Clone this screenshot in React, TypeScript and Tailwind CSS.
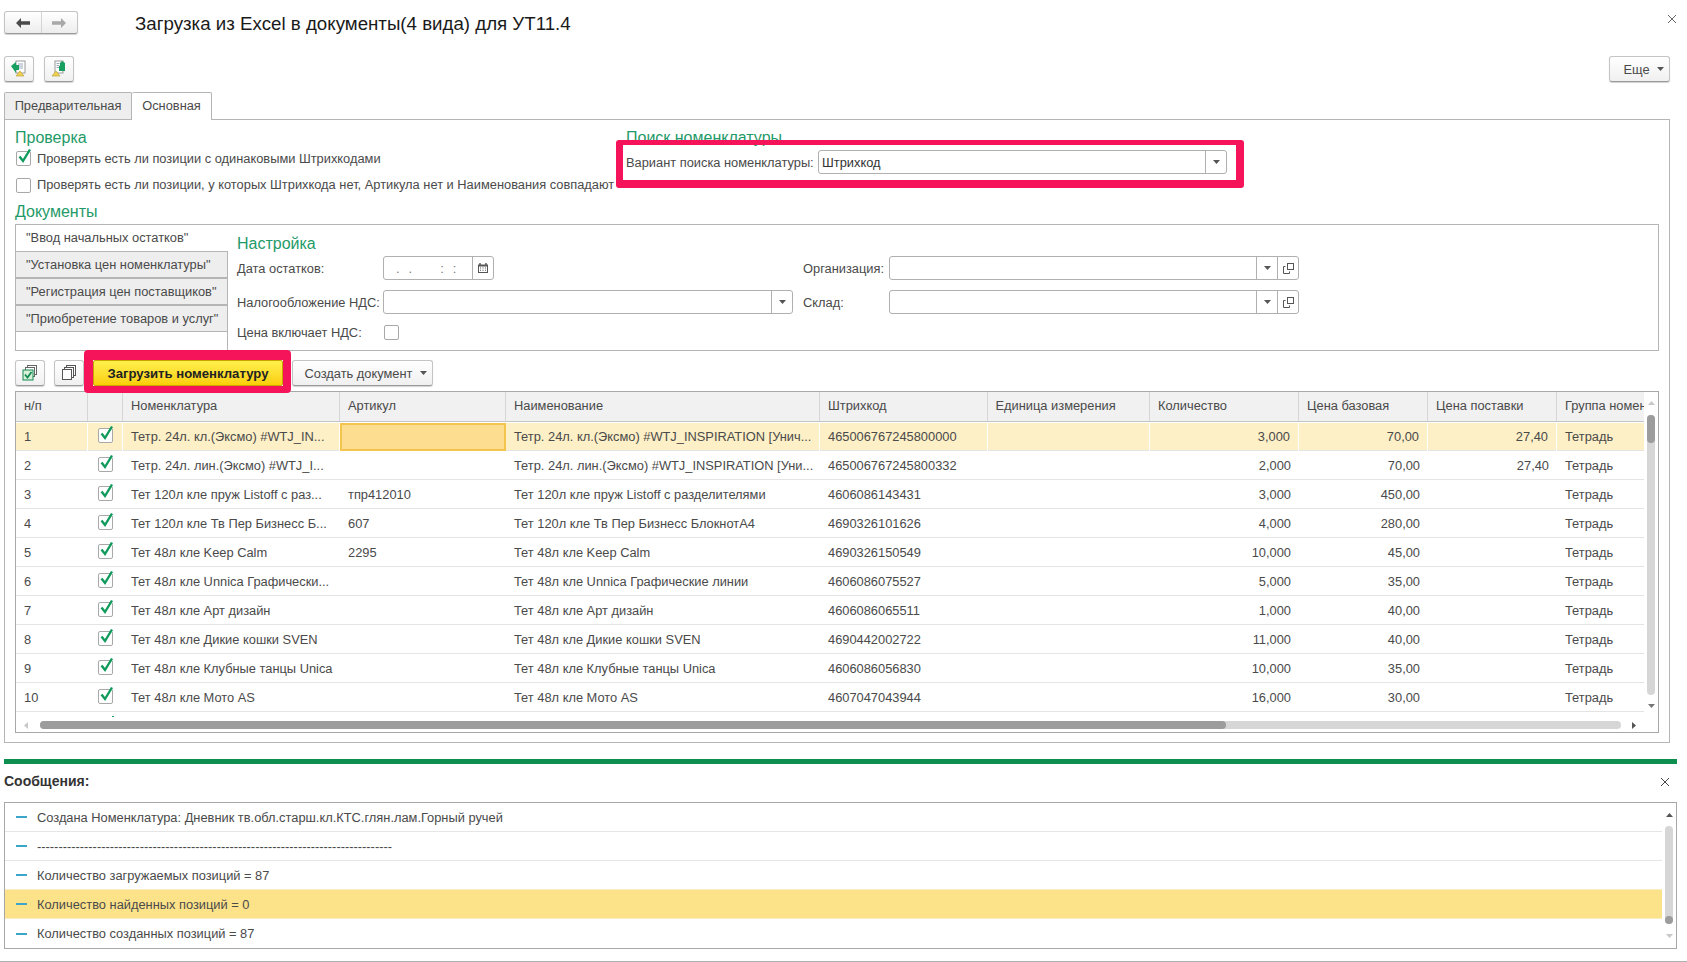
import React from "react";

const Caret = ({ className = "" }: { className?: string }) => (
  <svg width="7" height="4" viewBox="0 0 7 4" className={className}><path d="M0 0h7L3.5 4z" fill="#555" /></svg>
);

const CheckBox = ({ checked = false }: { checked?: boolean }) => (
  <span className="relative block w-[15px] h-[15px] rounded-[2px] border border-[#a8a8a8] bg-white shrink-0">
    {checked && (
      <svg width="17" height="18" viewBox="0 0 17 18" className="absolute left-[-1px] top-[-5px]">
        <path d="M3.5 9.5 L7 14 L14 2.5" fill="none" stroke="#109a5c" strokeWidth="2.4" />
      </svg>
    )}
  </span>
);

const ToolBtn = ({ children, className = "" }: { children: React.ReactNode; className?: string }) => (
  <div className={`flex items-center justify-center h-[26px] rounded-[3px] border border-[#c4c4c4] border-b-[#9a9a9a] bg-gradient-to-b from-white to-[#f0f0f0] shadow-[0_1px_1px_rgba(0,0,0,0.18)] ${className}`}>
    {children}
  </div>
);

const Field = ({ w, text, buttons }: { w: string; text?: string; buttons: React.ReactNode }) => (
  <div className={`flex h-[24px] rounded-[3px] border border-[#b0b0b0] bg-white ${w}`}>
    <div className="flex-1 pl-[3px] leading-[24px] text-[#333]">{text}</div>
    {buttons}
  </div>
);

const DropBtn = () => (
  <div className="w-[21px] border-l border-[#b0b0b0] flex items-center justify-center"><Caret /></div>
);

const OpenBtn = () => (
  <div className="w-[21px] border-l border-[#b0b0b0] flex items-center justify-center">
    <svg width="11" height="11" viewBox="0 0 11 11" fill="none" stroke="#555" strokeWidth="1">
      <rect x="4.5" y="0.5" width="6" height="6" />
      <path d="M2.5 3.5H0.5V10.5H6.5V8.5" />
    </svg>
  </div>
);

const Label = ({ w, children }: { w: string; children: React.ReactNode }) => (
  <span className={`pt-[2px] whitespace-nowrap ${w}`}>{children}</span>
);

const cols = "grid grid-cols-[72px_35px_217px_166px_314px_167.5px_162.5px_149px_129px_129px_87px]";

type Row = [string, string, string, string, string, string, string, string];
const rows: Row[] = [
  ["Тетр. 24л. кл.(Эксмо) #WTJ_IN...", "", "Тетр. 24л. кл.(Эксмо) #WTJ_INSPIRATION [Унич...", "465006767245800000", "3,000", "70,00", "27,40", "1"],
  ["Тетр. 24л. лин.(Эксмо) #WTJ_I...", "", "Тетр. 24л. лин.(Эксмо) #WTJ_INSPIRATION [Уни...", "465006767245800332", "2,000", "70,00", "27,40", "2"],
  ["Тет 120л кле пруж Listoff с раз...", "тпр412010", "Тет 120л кле пруж Listoff с разделителями", "4606086143431", "3,000", "450,00", "", "3"],
  ["Тет 120л кле Тв Пер Бизнесс Б...", "607", "Тет 120л кле Тв Пер Бизнесс БлокнотА4", "4690326101626", "4,000", "280,00", "", "4"],
  ["Тет 48л кле Keep Calm", "2295", "Тет 48л кле Keep Calm", "4690326150549", "10,000", "45,00", "", "5"],
  ["Тет 48л кле Unnica Графически...", "", "Тет 48л кле Unnica Графические линии", "4606086075527", "5,000", "35,00", "", "6"],
  ["Тет 48л кле Арт дизайн", "", "Тет 48л кле Арт дизайн", "4606086065511", "1,000", "40,00", "", "7"],
  ["Тет 48л кле Дикие кошки SVEN", "", "Тет 48л кле Дикие кошки SVEN", "4690442002722", "11,000", "40,00", "", "8"],
  ["Тет 48л кле Клубные танцы Unica", "", "Тет 48л кле Клубные танцы Unica", "4606086056830", "10,000", "35,00", "", "9"],
  ["Тет 48л кле Мото AS", "", "Тет 48л кле Мото AS", "4607047043944", "16,000", "30,00", "", "10"],
];

const headers = ["н/п", "", "Номенклатура", "Артикул", "Наименование", "Штрихкод", "Единица измерения", "Количество", "Цена базовая", "Цена поставки", "Группа номен"];

const messages = [
  "Создана Номенклатура: Дневник тв.обл.старш.кл.КТС.глян.лам.Горный ручей",
  "-----------------------------------------------------------------------------------",
  "Количество загружаемых позиций = 87",
  "Количество найденных позиций = 0",
  "Количество созданных позиций = 87",
];

const Heading = ({ children }: { children: React.ReactNode }) => (
  <div className="h-[20px] text-[16px] leading-[22px] text-[#1f9a68] whitespace-nowrap">{children}</div>
);

export default function App() {
  return (
    <div className="relative w-full h-[962px] overflow-hidden bg-white text-[12.85px] text-[#4a4a4a] font-['Liberation_Sans',Arial,sans-serif]">
      {/* title row */}
      <div className="flex items-start h-[56px] pt-[11px] pl-[4px] pr-[10px]">
        <div className="flex h-[23px] w-[74px] rounded-[3px] border border-[#c4c4c4] border-b-[#9a9a9a] bg-gradient-to-b from-white to-[#ededed] shadow-[0_1px_1px_rgba(0,0,0,0.18)]">
          <div className="flex-1 border-r border-[#d4d4d4] flex items-center justify-center">
            <svg width="14" height="10" viewBox="0 0 14 10"><path d="M0 5 5 0v3.3h9v3.4H5V10z" fill="#4a4a4a" /></svg>
          </div>
          <div className="flex-1 flex items-center justify-center">
            <svg width="14" height="10" viewBox="0 0 14 10"><path d="M14 5 9 0v3.3H0v3.4h9V10z" fill="#a8a8a8" /></svg>
          </div>
        </div>
        <div className="ml-[57px] text-[18.7px] leading-[26px] text-[#1a1a1a]">Загрузка из Excel в документы(4 вида) для УТ11.4</div>
        <svg width="10" height="10" viewBox="0 0 10 10" className="ml-auto mt-[3px]" stroke="#666" strokeWidth="1"><path d="M1 1l8 8M9 1l-8 8" /></svg>
      </div>

      {/* command bar */}
      <div className="flex items-start h-[36px] pl-[4px] pr-[17px] gap-[9.5px]">
        <ToolBtn className="w-[30px]">
          <svg width="18" height="18" viewBox="0 0 18 18">
            <rect x="6" y="1" width="9" height="12" fill="#fff" stroke="#9a9a9a" />
            <path d="M8 4h5M8 6h5M8 8h5" stroke="#9ab" strokeWidth="1" />
            <path d="M1 6l5-4v3h3v5H6v3z" fill="#18a060" />
            <path d="M10 11l4 5H6z" fill="#f2d24e" stroke="#b09a30" strokeWidth=".6" />
          </svg>
        </ToolBtn>
        <ToolBtn className="w-[30px]">
          <svg width="18" height="18" viewBox="0 0 18 18">
            <rect x="5" y="1" width="8" height="12" fill="#fff" stroke="#9a9a9a" />
            <path d="M6.5 3.5h3M6.5 5.5h3M6.5 7.5h3" stroke="#9ab" strokeWidth="1" />
            <path d="M9 6h1V3l2-2 3 2v8H9z" fill="#18a060" />
            <path d="M6 11l4 5H2z" fill="#f2d24e" stroke="#b09a30" strokeWidth=".6" />
          </svg>
        </ToolBtn>
        <ToolBtn className="w-[61px] ml-auto gap-[7px] pl-[8px]">
          <span className="pt-[2px]">Еще</span><Caret />
        </ToolBtn>
      </div>

      {/* tabs */}
      <div className="flex h-[27px] pl-[4px]">
        <div className="w-[128px] border border-b-0 border-[#b5b5b5] rounded-t-[2px] bg-[#eeeeee] text-center leading-[25px]">Предварительная</div>
        <div className="relative z-10 w-[80px] h-[28px] border border-l-0 border-b-0 border-[#b5b5b5] rounded-t-[2px] bg-white text-center leading-[25px]">Основная</div>
      </div>

      {/* main panel */}
      <div className="ml-[4px] w-[1666px] h-[624px] border border-[#b5b5b5] pl-[10px] pr-[9px] pt-[7px]">
        <div className="flex h-[97px]">
          <div className="w-[611px] shrink-0">
            <Heading>Проверка</Heading>
            <div className="flex items-center h-[16px] mt-[3px] pl-[1px] gap-[6px]">
              <CheckBox checked /><Label w="">Проверять есть ли позиции с одинаковыми Штрихкодами</Label>
            </div>
            <div className="flex items-center h-[16px] mt-[11px] pl-[1px] gap-[6px]">
              <CheckBox /><span className="whitespace-nowrap">Проверять есть ли позиции, у которых Штрихкода нет, Артикула нет и Наименования совпадают</span>
            </div>
            <div className="mt-[9px] text-[16px] leading-[20px] text-[#1f9a68]">Документы</div>
          </div>
          <div>
            <Heading>Поиск номенклатуры</Heading>
            <div className="flex items-center mt-[3px]">
              <Label w="w-[192px]">Вариант поиска номенклатуры:</Label>
              <Field w="w-[409px]" text="Штрихкод" buttons={<DropBtn />} />
            </div>
          </div>
        </div>

        {/* documents */}
        <div className="flex w-[1644px] h-[127px] border border-[#b5b5b5]">
          <div className="w-[211px] shrink-0">
            <div className="h-[26px] pl-[10px] leading-[26px] rounded-l-[2px] bg-white">"Ввод начальных остатков"</div>
            {['"Установка цен номенклатуры"', '"Регистрация цен поставщиков"', '"Приобретение товаров и услуг"'].map((t) => (
              <div key={t} className="h-[27px] pl-[10px] leading-[25px] bg-[#eeeeee] border-t border-b border-[#b5b5b5] whitespace-nowrap">{t}</div>
            ))}
          </div>
          <div className="flex-1 relative pl-[10px] pt-[8px]">
            <div className="absolute left-0 top-[26px] bottom-0 border-l border-[#b5b5b5]" />
            <Heading>Настройка</Heading>
            <div className="flex mt-[3px]">
              <div className="w-[566px]">
                <div className="flex items-center h-[24px]">
                  <Label w="w-[146px]">Дата остатков:</Label>
                  <div className="flex h-[24px] w-[111px] rounded-[3px] border border-[#b0b0b0]">
                    <div className="flex-1 flex pl-[12px] leading-[24px] text-[#777]">
                      <span>.</span><span className="ml-[9px]">.</span><span className="ml-[28px]">:</span><span className="ml-[9px]">:</span>
                    </div>
                    <div className="w-[21px] border-l border-[#b0b0b0] flex items-center justify-center">
                      <svg width="10" height="10" viewBox="0 0 10 10">
                        <path d="M0 1.5h10V10H0z" fill="#555" />
                        <path d="M2 0v2M8 0v2" stroke="#555" strokeWidth="1.4" />
                        <rect x="1" y="3.5" width="8" height="5.5" fill="#fff" />
                        <path d="M2 5h1M4.5 5h1M7 5h1M2 7.2h1M4.5 7.2h1M7 7.2h1" stroke="#555" strokeWidth="1.1" />
                      </svg>
                    </div>
                  </div>
                </div>
                <div className="flex items-center h-[24px] mt-[10px]">
                  <Label w="w-[146px]">Налогообложение НДС:</Label>
                  <Field w="w-[410px]" buttons={<DropBtn />} />
                </div>
                <div className="flex items-center h-[16px] mt-[10px]">
                  <Label w="w-[147px]">Цена включает НДС:</Label>
                  <CheckBox />
                </div>
              </div>
              <div>
                <div className="flex items-center h-[24px]">
                  <Label w="w-[86px]">Организация:</Label>
                  <Field w="w-[410px]" buttons={<><DropBtn /><OpenBtn /></>} />
                </div>
                <div className="flex items-center h-[24px] mt-[10px]">
                  <Label w="w-[86px]">Склад:</Label>
                  <Field w="w-[410px]" buttons={<><DropBtn /><OpenBtn /></>} />
                </div>
              </div>
            </div>
          </div>
        </div>

        {/* table toolbar */}
        <div className="flex items-start h-[40px] pt-[9px]">
          <ToolBtn className="w-[30px]">
            <svg width="16" height="16" viewBox="0 0 16 16">
              <rect x="5.5" y="0.5" width="9" height="9" fill="#fff" stroke="#666" />
              <rect x="3.5" y="2.5" width="9" height="9" fill="#fff" stroke="#666" />
              <rect x="1" y="5" width="10" height="10" fill="#d8efd8" stroke="#128a50" />
              <path d="M3 9.5 5.5 12.5 9.5 7" fill="none" stroke="#128a50" strokeWidth="1.8" />
            </svg>
          </ToolBtn>
          <ToolBtn className="w-[30px] ml-[9px]">
            <svg width="16" height="16" viewBox="0 0 16 16" fill="#fff" stroke="#555">
              <rect x="5.5" y="0.5" width="9" height="10" />
              <rect x="3.5" y="2.5" width="9" height="10" />
              <rect x="1.5" y="4.5" width="9" height="10" />
            </svg>
          </ToolBtn>
          <div className="w-[190px] h-[26px] ml-[9px] shrink-0 rounded-[2px] border border-[#c9a400] bg-gradient-to-b from-[#fff04a] to-[#fbcf00] text-center leading-[26px] font-bold text-[13.15px] text-[#222]">Загрузить номенклатуру</div>
          <ToolBtn className="w-[141px] ml-[9px] gap-[7px] pl-[6px]">
            <span className="pt-[2px]">Создать документ</span><Caret />
          </ToolBtn>
        </div>

        {/* table */}
        <div className="relative w-[1644px] h-[342px] border border-[#a8a8a8] bg-white">
          <div className="flex h-[326px]">
            <div className="w-[1628px] overflow-hidden">
              <div className={`${cols} h-[30px] bg-[#f1f1f1] border-b border-[#c4c4c4]`}>
                {headers.map((h, i) => (
                  <div key={i} className="border-r border-[#d6d6d6] last:border-r-0 pl-[8px] leading-[27px] overflow-hidden whitespace-nowrap">{h}</div>
                ))}
              </div>
              {[...rows, ["", "", "", "", "", "", "", ""] as Row].map((r, idx) => {
                const sel = idx === 0;
                const last = idx === 10;
                const lh = sel ? "leading-[28px]" : "leading-[30px]";
                const sep = sel ? "border-r border-white" : "";
                return (
                  <div key={idx} className={`${cols} h-[29px] ${last ? "" : "border-b border-[#e4e4e4]"} ${sel ? "bg-[#fdf0c6] border-t border-t-white" : ""}`}>
                    <div className={`pl-[8px] ${lh} ${sep}`}>{r[7]}</div>
                    <div className={`pl-[10px] ${sel ? "pt-[5px]" : "pt-[6px]"} ${sep}`}>
                      {last ? <div className="ml-[14px] mt-[-2px] w-[2px] h-[1px] bg-[#109a5c]" /> : <CheckBox checked />}
                    </div>
                    <div className={`pl-[8px] ${lh} whitespace-nowrap overflow-hidden ${sep}`}>{r[0]}</div>
                    <div className={`pl-[8px] ${lh} ${sel ? "border-2 border-[#f3c44e] bg-[#fdde90]" : ""}`}>{r[1]}</div>
                    <div className={`pl-[8px] ${lh} whitespace-nowrap overflow-hidden ${sep}`}>{r[2]}</div>
                    <div className={`pl-[8px] ${lh} ${sep}`}>{r[3]}</div>
                    <div className={sep} />
                    <div className={`pr-[8px] text-right ${lh} ${sep}`}>{r[4]}</div>
                    <div className={`pr-[8px] text-right ${lh} ${sep}`}>{r[5]}</div>
                    <div className={`pr-[8px] text-right ${lh} ${sep}`}>{r[6]}</div>
                    <div className={`pl-[8px] ${lh}`}>{last ? "" : "Тетрадь"}</div>
                  </div>
                );
              })}
            </div>
            <div className="w-[14px] flex flex-col items-center">
              <svg width="7" height="4" viewBox="0 0 7 4" className="mt-[9px]"><path d="M0 4h7L3.5 0z" fill="#c8c8c8" /></svg>
              <div className="mt-[10px] w-[8px] h-[280px] rounded-[4px] bg-[#d6d6d6] ml-[-1px]">
                <div className="w-[8px] h-[28px] rounded-[4px] bg-[#9c9c9c]" />
              </div>
              <svg width="7" height="4" viewBox="0 0 7 4" className="mt-[9px]"><path d="M0 0h7L3.5 4z" fill="#777" /></svg>
            </div>
          </div>
          <div className="flex items-center h-[14px] pl-[8px]">
            <svg width="4" height="7" viewBox="0 0 4 7"><path d="M4 0v7L0 3.5z" fill="#c8c8c8" /></svg>
            <div className="ml-[12px] w-[1581px] h-[8px] rounded-[4px] bg-[#d6d6d6]">
              <div className="w-[1186px] h-[8px] rounded-[4px] bg-[#9c9c9c]" />
            </div>
            <svg width="4" height="7" viewBox="0 0 4 7" className="ml-[11px]"><path d="M0 0v7L4 3.5z" fill="#555" /></svg>
          </div>
        </div>
      </div>

      {/* splitter */}
      <div className="ml-[4px] mr-[10px] mt-[16px] h-[5px] bg-[#0f8f4f]" />

      {/* messages */}
      <div className="flex items-center justify-between h-[38px] pb-[3px] pl-[4px] pr-[17px]">
        <span className="font-bold text-[14px] text-[#333]">Сообщения:</span>
        <svg width="10" height="10" viewBox="0 0 10 10" stroke="#444" strokeWidth="1"><path d="M1 1l8 8M9 1l-8 8" /></svg>
      </div>
      <div className="flex ml-[4px] mr-[10px] h-[147px] border border-[#a8a8a8]">
        <div className="flex-1">
          {messages.map((m, i) => (
            <div key={i} className={`flex items-center border-b last:border-b-0 ${i === 3 ? "bg-[#fce38a] border-t border-[#f7ecc5] h-[30px] -mt-[1px]" : "h-[29px] border-[#e6e6e6]"}`}>
              <span className="ml-[11px] w-[11px] h-[2px] bg-[#3ba6c9]" />
              <span className="ml-[10px] pt-[1px] whitespace-nowrap">{m}</span>
            </div>
          ))}
        </div>
        <div className="w-[14px] flex flex-col items-center">
          <svg width="7" height="4" viewBox="0 0 7 4" className="mt-[10px]"><path d="M0 4h7L3.5 0z" fill="#555" /></svg>
          <div className="relative mt-[9px] w-[8px] h-[98px] rounded-[4px] bg-[#d6d6d6] ml-[-1px]">
            <div className="absolute bottom-0 w-[8px] h-[8px] rounded-[4px] bg-[#9c9c9c]" />
          </div>
          <svg width="7" height="4" viewBox="0 0 7 4" className="mt-[10px]"><path d="M0 0h7L3.5 4z" fill="#c8c8c8" /></svg>
        </div>
      </div>
      <div className="mt-[12px] h-[1px] bg-[#b0b0b0]" />

      {/* annotation frames */}
      <div className="absolute left-[616px] top-[140px] w-[628px] h-[48px] rounded-[3px] border-[#f5145a] border-t-[5px] border-b-[8px] border-l-[7px] border-r-[8px]" />
      <div className="absolute left-[84px] top-[350px] w-[207px] h-[43px] rounded-[4px] border-[#f5145a] border-t-[10px] border-b-[7px] border-l-[9px] border-r-[8px]" />
    </div>
  );
}
